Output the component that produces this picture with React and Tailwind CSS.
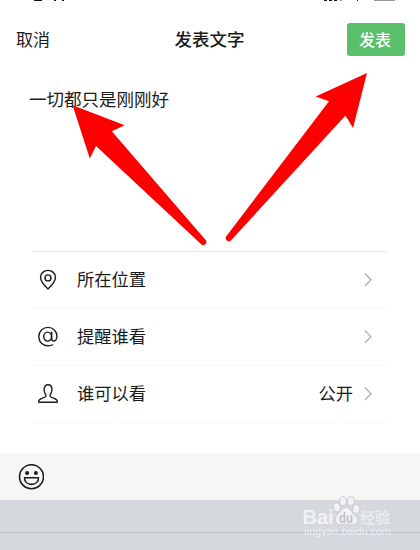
import React from 'react';

const PinIcon = () => (
  <svg viewBox="0 0 20 22" className="w-5 h-[22px]" fill="none" stroke="#1c1c1c" strokeWidth="1.4">
    <path d="M10 20C7.2 17.2 2.5 12.4 2.5 8.4C2.5 4.3 5.9 1.4 10 1.4C14.1 1.4 17.5 4.3 17.5 8.4C17.5 12.4 12.8 17.2 10 20Z" strokeLinejoin="round" />
    <circle cx="10" cy="8.9" r="3" />
  </svg>
);

const AtIcon = () => (
  <svg viewBox="0 0 20 22" className="w-5 h-[22px]" fill="none" stroke="#1c1c1c" strokeWidth="1.4">
    <ellipse cx="9.6" cy="10.6" rx="3.9" ry="4.5" />
    <path d="M13.7 5.8V12.4C13.7 14.3 14.5 15.2 15.8 15C17.8 14.7 18.9 12.6 18.9 10.2C18.9 5.2 15 1.4 10 1.4C4.9 1.4 0.8 5.4 0.8 10.7C0.8 16 4.8 19.8 10 19.8C12 19.8 13.7 19.3 15.2 18.5" />
  </svg>
);

const PersonIcon = () => (
  <svg viewBox="0 0 20 22" className="w-5 h-[22px]" fill="none" stroke="#1c1c1c" strokeWidth="1.4" strokeLinejoin="round">
    <path d="M0.8 19.3V17.4C2.4 15.7 6 14.8 7.4 13.8C8.3 13.1 8 12 7.4 11.1C6.6 9.9 6.1 8.2 6.1 6.4C6.1 3.5 7.8 1.8 10 1.8C12.2 1.8 13.9 3.5 13.9 6.4C13.9 8.2 13.4 9.9 12.6 11.1C12 12 11.7 13.1 12.6 13.8C14 14.8 17.6 15.7 19.2 17.4V19.3Z" />
  </svg>
);

const SmileIcon = () => (
  <svg viewBox="0 0 26 26" className="w-[26px] h-[26px]" fill="none" stroke="#1c1c1c" strokeWidth="1.6">
    <circle cx="13.5" cy="12.7" r="12" />
    <circle cx="9.1" cy="9" r="2" fill="#1c1c1c" stroke="none" />
    <circle cx="17.9" cy="9" r="2" fill="#1c1c1c" stroke="none" />
    <path d="M6.5 13.7H20.5C20.5 17.6 17.7 20.4 13.5 20.4C9.3 20.4 6.5 17.6 6.5 13.7Z" strokeLinejoin="round" />
  </svg>
);

const Chevron = () => (
  <svg viewBox="0 0 8 14" className="w-2 h-3.5" fill="none" stroke="#b2b2b2" strokeWidth="1.4">
    <path d="M0.8 0.5L7 6.7L0.8 12.9" />
  </svg>
);

// Bottom edge of the phone's status bar, cut off by the top of the screen
const StatusBar = () => (
  <svg viewBox="0 0 420 2" className="block w-full h-0.5" fill="#111">
    <path d="M34 0H42V1H34ZM54 0H56V1H54ZM62 0H64V1H62ZM324 0H327V1H324ZM329 0H332V1H329ZM334 0H337V1H334ZM357 0H358V1H357Z" />
    <path d="M340 0H342V1H340ZM374 0H395V1H374Z" fill="#999" />
  </svg>
);

const Arrows = () => (
  <svg viewBox="0 0 420 550" className="absolute inset-0 w-[420px] h-[550px] pointer-events-none" fill="#fe0000">
    <path d="M72.6 105.3L124.7 125.3L111.8 131.2L205.4 239.8A3 3 0 0 1 201.2 244.2L96 146L89.8 158.5Z" />
    <path d="M367 73L315.7 96.5L329 101.3L226.5 235.9A3 3 0 0 0 231.4 240L345.5 115.4L353 128Z" />
  </svg>
);

const Watermark = () => (
  <div className="absolute left-[303px] top-[495px] w-[100px] h-[50px] text-[#f1f2f4] font-['Liberation_Sans','Noto_Sans_CJK_SC',sans-serif]">
    <svg viewBox="0 0 100 50" className="w-[100px] h-[50px]" fill="currentColor">
      <g stroke="#c6c9cd" strokeWidth="0.8">
        <ellipse cx="34" cy="12.3" rx="3.4" ry="4.4" transform="rotate(-12 34 12.3)" />
        <ellipse cx="40" cy="6" rx="3.4" ry="4.6" />
        <ellipse cx="48" cy="6" rx="3.4" ry="4.6" transform="rotate(10 48 6)" />
        <ellipse cx="53.2" cy="14" rx="3.4" ry="4.4" transform="rotate(12 53.2 14)" />
        <path d="M43 12.5C38.5 12.5 37 18 34 20.5C31 23.5 32 29.8 37 29.8C40 29.8 41 29.3 43 29.3C46 29.3 47 29.8 50 29.8C55 29.8 56 24 52 20.5C49 18 47.5 12.5 43 12.5Z" />
      </g>
      <text x="36" y="27.5" fontSize="14" fontWeight="bold" fill="#bfc2c7" textLength="14" lengthAdjust="spacingAndGlyphs">du</text>
      <text x="-0.5" y="29.3" fontSize="21" fontWeight="bold" textLength="31" lengthAdjust="spacingAndGlyphs">Bai</text>
      <text x="57" y="27.8" fontSize="15" fontWeight="bold" textLength="30" fill="#eaebee">经验</text>
      <text x="1" y="39.7" fontSize="10" fontFamily="DejaVu Sans" textLength="87" lengthAdjust="spacingAndGlyphs" fill="#eeeff1">jingyan.baidu.com</text>
    </svg>
  </div>
);

const options = [
  { label: '所在位置', icon: PinIcon },
  { label: '提醒谁看', icon: AtIcon },
  { label: '谁可以看', icon: PersonIcon, value: '公开' },
];

export default function App() {
  return (
    <div className="relative w-[420px] h-[550px] overflow-hidden flex flex-col bg-white text-[#1a1a1a] text-[17.3px] leading-6 font-['Noto_Sans_CJK_SC',sans-serif]">
      <StatusBar />

      {/* Header */}
      <header className="mt-[21px] h-[33px] pl-4 pr-[15px] flex items-center justify-between">
        <button className="w-[58px] pb-0.5 text-left text-[17px]">取消</button>
        <h1 className="pb-0.5 pr-0.5 text-[17.5px] font-medium">发表文字</h1>
        <button className="w-[58px] h-[33px] pb-0.5 pr-0.5 rounded-[3px] bg-[#5abf6b] text-white text-base font-medium">发表</button>
      </header>

      {/* Post text */}
      <main className="h-[195px] pt-[31px] pl-[29px] text-[17.5px]">一切都只是刚刚好</main>

      {/* Options */}
      <ul className="mx-8 border-t border-[#e9e9e9]">
        {options.map(({ label, icon: Icon, value }) => (
          <li key={label} className="h-[57px] pl-1.5 pr-4 flex items-center border-b border-[#f6f6f6]">
            <Icon />
            <span className="ml-[19px] pb-0.5 flex-1">{label}</span>
            {value && <span className="mr-[11px] pb-0.5">{value}</span>}
            <Chevron />
          </li>
        ))}
      </ul>

      {/* Emoji bar */}
      <div className="mt-auto h-[46px] pl-[18px] flex items-center bg-[#f6f6f6]">
        <SmileIcon />
      </div>

      {/* Top of the keyboard */}
      <div className="h-[50px] bg-[#d5d8dd]">
        <div className="h-[33px] border-b border-[#b9bcc1]" />
      </div>

      <Arrows />
      <Watermark />
    </div>
  );
}
